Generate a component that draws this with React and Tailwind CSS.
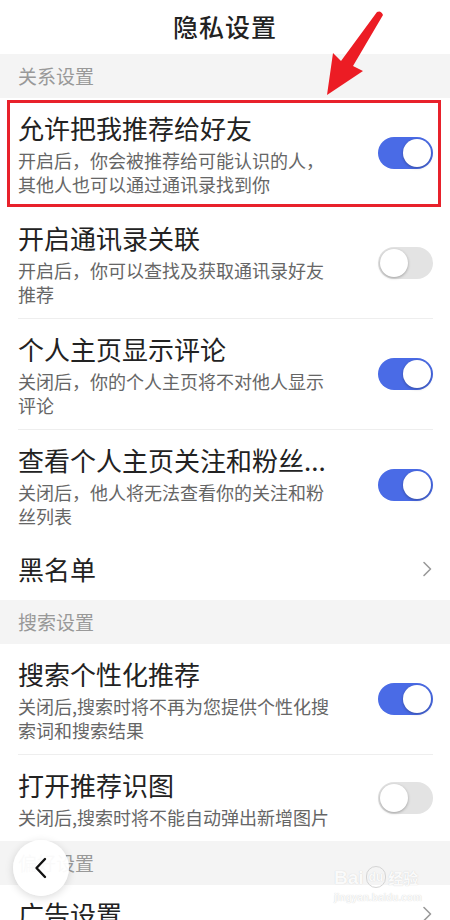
import React, { useState } from 'react';

const sections = [
  {
    title: '关系设置',
    items: [
      { name: '允许把我推荐给好友', desc: '开启后，你会被推荐给可能认识的人，其他人也可以通过通讯录找到你', on: true, marked: true },
      { name: '开启通讯录关联', desc: '开启后，你可以查找及获取通讯录好友推荐', on: false },
      { name: '个人主页显示评论', desc: '关闭后，你的个人主页将不对他人显示评论', on: true },
      { name: '查看个人主页关注和粉丝...', desc: '关闭后，他人将无法查看你的关注和粉丝列表', on: true },
      { name: '黑名单', link: true },
    ],
  },
  {
    title: '搜索设置',
    items: [
      { name: '搜索个性化推荐', desc: '关闭后,搜索时将不再为您提供个性化搜索词和搜索结果', on: true },
      { name: '打开推荐识图', desc: '关闭后,搜索时将不能自动弹出新增图片', on: false },
    ],
  },
  {
    title: '偏好设置',
    items: [{ name: '广告设置', link: true }],
  },
];

function Toggle({ on, onClick }) {
  return (
    <button
      onClick={onClick}
      className={`relative w-[55px] h-[32px] rounded-full shrink-0 ${on ? 'bg-[#4a6be6]' : 'bg-[#e3e3e3]'}`}
    >
      <span
        className={`absolute top-[2px] w-[28px] h-[28px] rounded-full bg-white shadow-[0_1px_3px_rgba(0,0,0,0.3)] ${on ? 'right-[2px]' : 'left-[2px]'}`}
      />
    </button>
  );
}

function Chevron() {
  return (
    <svg width="10" height="16" viewBox="0 0 10 16" className="shrink-0">
      <path d="M2 1.5 L8.5 8 L2 14.5" fill="none" stroke="#9a9a9a" strokeWidth="1.6" strokeLinecap="round" strokeLinejoin="round" />
    </svg>
  );
}

function Row({ item, last, onToggle }) {
  if (item.link) {
    return (
      <div className="flex items-center justify-between pl-[18px] pr-[18px] h-[60px] pb-[2px]">
        <span className="text-[26px] leading-[36px] text-[#222]">{item.name}</span>
        <Chevron />
      </div>
    );
  }
  return (
    <div className="relative pl-[18px] pr-[17px]">
      <div className={`flex items-center justify-between pt-[12px] pb-[12px] ${last ? '' : 'border-b border-[#eeeeee]'}`}>
        <div className="w-[318px]">
          <div className="text-[26px] leading-[36px] text-[#222] whitespace-nowrap">{item.name}</div>
          <div className="mt-[2px] text-[18px] leading-[24px] text-[#666]">{item.desc}</div>
        </div>
        <Toggle on={item.on} onClick={onToggle} />
      </div>
      {item.marked && (
        <div className="absolute left-[7px] right-[9px] top-[2px] bottom-[1px] border-[3px] border-[#e8212b] pointer-events-none" />
      )}
    </div>
  );
}

export default function App() {
  const [state, setState] = useState(sections);

  const toggle = (si, ii) => {
    setState(prev =>
      prev.map((s, a) =>
        a !== si ? s : { ...s, items: s.items.map((it, b) => (b !== ii ? it : { ...it, on: !it.on })) }
      )
    );
  };

  return (
    <div className="relative w-[450px] h-[920px] overflow-hidden bg-white font-['Noto_Sans_CJK_SC','Noto_Sans',sans-serif]">
      <div className="h-[54px] flex items-center justify-center">
        <h1 className="text-[25px] font-medium text-[#222] tracking-[1px]">隐私设置</h1>
      </div>

      {state.map((s, si) => (
        <div key={s.title}>
          <div className="h-[44px] bg-[#f4f4f4] flex items-center pl-[18px] text-[19px] text-[#999]">{s.title}</div>
          {s.items.map((it, ii) => (
            <Row
              key={it.name}
              item={it}
              last={ii === s.items.length - 1 || s.items[ii + 1].link || it.marked}
              onToggle={() => toggle(si, ii)}
            />
          ))}
        </div>
      ))}

      {/* red arrow annotation */}
      <svg className="absolute left-0 top-0 pointer-events-none" width="450" height="120">
        <path
          d="M377 12 Q381 10 383 15 L353 66 L363 71 L327 95 L333 53 L341 61 Z"
          fill="#ec1c24"
        />
      </svg>

      {/* floating back button */}
      <button className="absolute left-[13px] top-[840px] w-[56px] h-[56px] rounded-full bg-white/95 shadow-[0_2px_8px_rgba(0,0,0,0.15)] flex items-center justify-center">
        <svg width="16" height="22" viewBox="0 0 16 22">
          <path d="M12 2 L3.5 11 L12 20" fill="none" stroke="#111" strokeWidth="2.4" strokeLinecap="round" strokeLinejoin="round" />
        </svg>
      </button>

      {/* watermark */}
      <div className="absolute left-[334px] top-[866px] flex flex-col items-start pointer-events-none text-white/90 [text-shadow:0_0_1px_#c8c8c8]">
        <div className="flex items-end font-['Liberation_Sans',sans-serif] font-bold text-[19px] leading-[20px]">
          <span>Bai</span>
          <span className="ml-[2px] text-[12px] border border-[#d4d4d4] rounded-full px-[2px]">du</span>
          <span className="ml-[2px] text-[15px] font-['Noto_Sans_CJK_SC',sans-serif]">经验</span>
        </div>
        <div className="text-[10px] font-['Liberation_Sans',sans-serif] font-bold mt-[2px]">jingyan.baidu.com</div>
      </div>
    </div>
  );
}
